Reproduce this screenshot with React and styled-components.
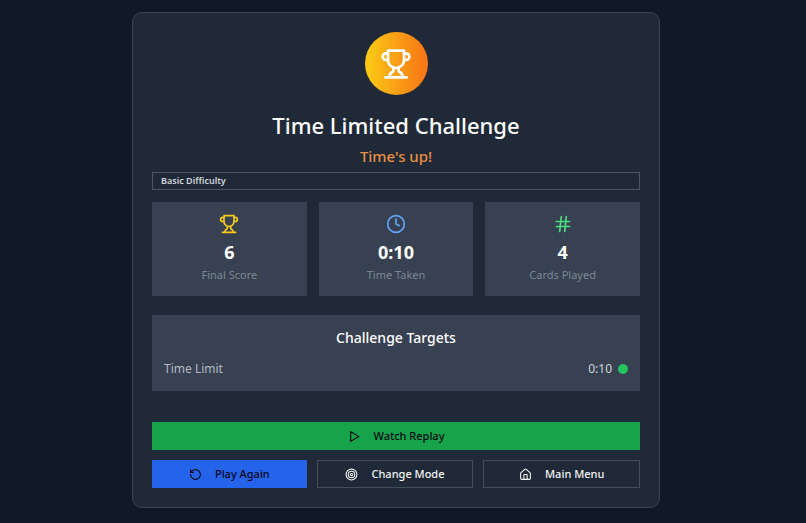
import styled, { createGlobalStyle } from "styled-components";
import { Clock, Hash, House, RotateCcw, Target } from "lucide-react";

const stats = [
    { icon: Trophy, color: "#facc15", value: "6", label: "Final Score" },
    { icon: Clock, color: "#60a5fa", value: "0:10", label: "Time Taken" },
    { icon: Hash, color: "#4ade80", value: "4", label: "Cards Played" },
];

function Icon({ size, children }) {
    return (
        <svg
            width={size}
            height={size}
            viewBox="0 0 24 24"
            fill="none"
            stroke="currentColor"
            strokeWidth="2"
            strokeLinecap="round"
            strokeLinejoin="round"
            aria-hidden="true"
        >
            {children}
        </svg>
    );
}

function Trophy({ size }) {
    return (
        <Icon size={size}>
            <path d="M6 9H4.5a2.5 2.5 0 0 1 0-5H6" />
            <path d="M18 9h1.5a2.5 2.5 0 0 0 0-5H18" />
            <path d="M4 22h16" />
            <path d="M10 14.66V17c0 .55-.47.98-.97 1.21C7.85 18.75 7 20.24 7 22" />
            <path d="M14 14.66V17c0 .55.47.98.97 1.21C16.15 18.75 17 20.24 17 22" />
            <path d="M18 2H6v7a6 6 0 0 0 12 0V2Z" />
        </Icon>
    );
}

function Play({ size }) {
    return (
        <Icon size={size}>
            <polygon points="5 3 20 12 5 21 5 3" />
        </Icon>
    );
}

const App = () => {
    return (
        <Page>
            <GlobalStyle />
            <Card>
                <Header>
                    <Medal>
                        <Trophy size={32} />
                    </Medal>
                    <Title>Time Limited Challenge</Title>
                    <Result>Time's up!</Result>
                    <Difficulty>Basic Difficulty</Difficulty>
                </Header>
                <Stats>
                    {stats.map(({ icon: StatSymbol, color, value, label }) => (
                        <Stat key={label}>
                            <StatIcon $color={color}>
                                <StatSymbol size={20} />
                            </StatIcon>
                            <StatValue>{value}</StatValue>
                            <StatLabel>{label}</StatLabel>
                        </Stat>
                    ))}
                </Stats>
                <Targets>
                    <TargetsTitle>Challenge Targets</TargetsTitle>
                    <TargetRow>
                        <TargetName>Time Limit</TargetName>
                        <TargetValue>
                            0:10
                            <Dot />
                        </TargetValue>
                    </TargetRow>
                </Targets>
                <Actions>
                    <Button type="button" $color="#16a34a">
                        <Play size={13} />
                        Watch Replay
                    </Button>
                    <ButtonRow>
                        <Button type="button" $color="#2563eb">
                            <RotateCcw size={13} />
                            Play Again
                        </Button>
                        <OutlineButton type="button">
                            <Target size={13} />
                            Change Mode
                        </OutlineButton>
                        <OutlineButton type="button">
                            <House size={13} />
                            Main Menu
                        </OutlineButton>
                    </ButtonRow>
                </Actions>
            </Card>
        </Page>
    );
};

export default App;

const GlobalStyle = createGlobalStyle`
    * {
        box-sizing: border-box;
    }

    body {
        margin: 0;
        background-color: #111827;
        color: #ffffff;
        font-family: "Noto Sans", "Open Sans", sans-serif;
    }
`

const Page = styled.main`
    display: flex;
    justify-content: center;
    padding: 12px 14px 15px 0;
`

const Card = styled.section`
    width: 100%;
    max-width: 528px;
    padding: 19px;
    border: 1px solid #3b4554;
    border-radius: 10px;
    background-color: #1f2937;
`

const Header = styled.header`
    display: flex;
    flex-direction: column;
    align-items: center;
`

const Medal = styled.div`
    display: flex;
    align-items: center;
    justify-content: center;
    width: 63px;
    height: 63px;
    border-radius: 50%;
    background: linear-gradient(to right, #facc15, #f97316);
`

const Title = styled.h1`
    margin: 15px 0 5px;
    font-size: 22px;
    font-weight: 500;
    line-height: 30px;
`

const Result = styled.p`
    margin: 0 0 4px;
    color: #ea8f42;
    font-size: 15px;
    font-weight: 500;
    line-height: 23px;
`

const Difficulty = styled.div`
    width: 100%;
    padding: 0 8px;
    border: 1px solid #4b5563;
    color: #d1d5db;
    font-size: 9px;
    font-weight: 600;
    line-height: 16px;
`

const Stats = styled.div`
    display: grid;
    grid-template-columns: repeat(3, 1fr);
    gap: 12px;
    margin-top: 12px;
`

const Stat = styled.div`
    display: flex;
    flex-direction: column;
    align-items: center;
    padding: 12px 12px 14px;
    background-color: #374151;
`

const StatIcon = styled.span`
    display: flex;
    color: ${(props) => props.$color};
`

const StatValue = styled.strong`
    margin: 6px 0 4px;
    font-size: 18px;
    font-weight: 700;
    line-height: 24px;
`

const StatLabel = styled.span`
    color: #7d8794;
    font-size: 11px;
    line-height: 14px;
`

const Targets = styled.section`
    margin-top: 19px;
    padding: 12px 12px 11px;
    background-color: #374151;
`

const TargetsTitle = styled.h2`
    margin: 0 0 9px;
    font-size: 14px;
    font-weight: 500;
    line-height: 22px;
    text-align: center;
`

const TargetRow = styled.div`
    display: flex;
    align-items: center;
    justify-content: space-between;
    font-size: 12px;
    line-height: 22px;
`

const TargetName = styled.span`
    color: #b4bac4;
`

const TargetValue = styled.span`
    display: flex;
    align-items: center;
    gap: 6px;
    color: #d1d5db;
`

const Dot = styled.span`
    width: 10px;
    height: 10px;
    border-radius: 50%;
    background-color: #22c55e;
`

const Actions = styled.div`
    display: flex;
    flex-direction: column;
    gap: 10px;
    margin-top: 31px;
`

const ButtonRow = styled.div`
    display: flex;
    gap: 10px;
`

const Button = styled.button`
    display: flex;
    flex: 1;
    align-items: center;
    justify-content: center;
    gap: 13px;
    min-height: 28px;
    padding: 0 12px;
    border: 0;
    background-color: ${(props) => props.$color};
    color: #020817;
    font-family: inherit;
    font-size: 11px;
    font-weight: 500;
    line-height: 16px;
    cursor: pointer;
`

const OutlineButton = styled(Button)`
    border: 1px solid #434d5c;
    background-color: transparent;
    color: #f3f4f6;
`
